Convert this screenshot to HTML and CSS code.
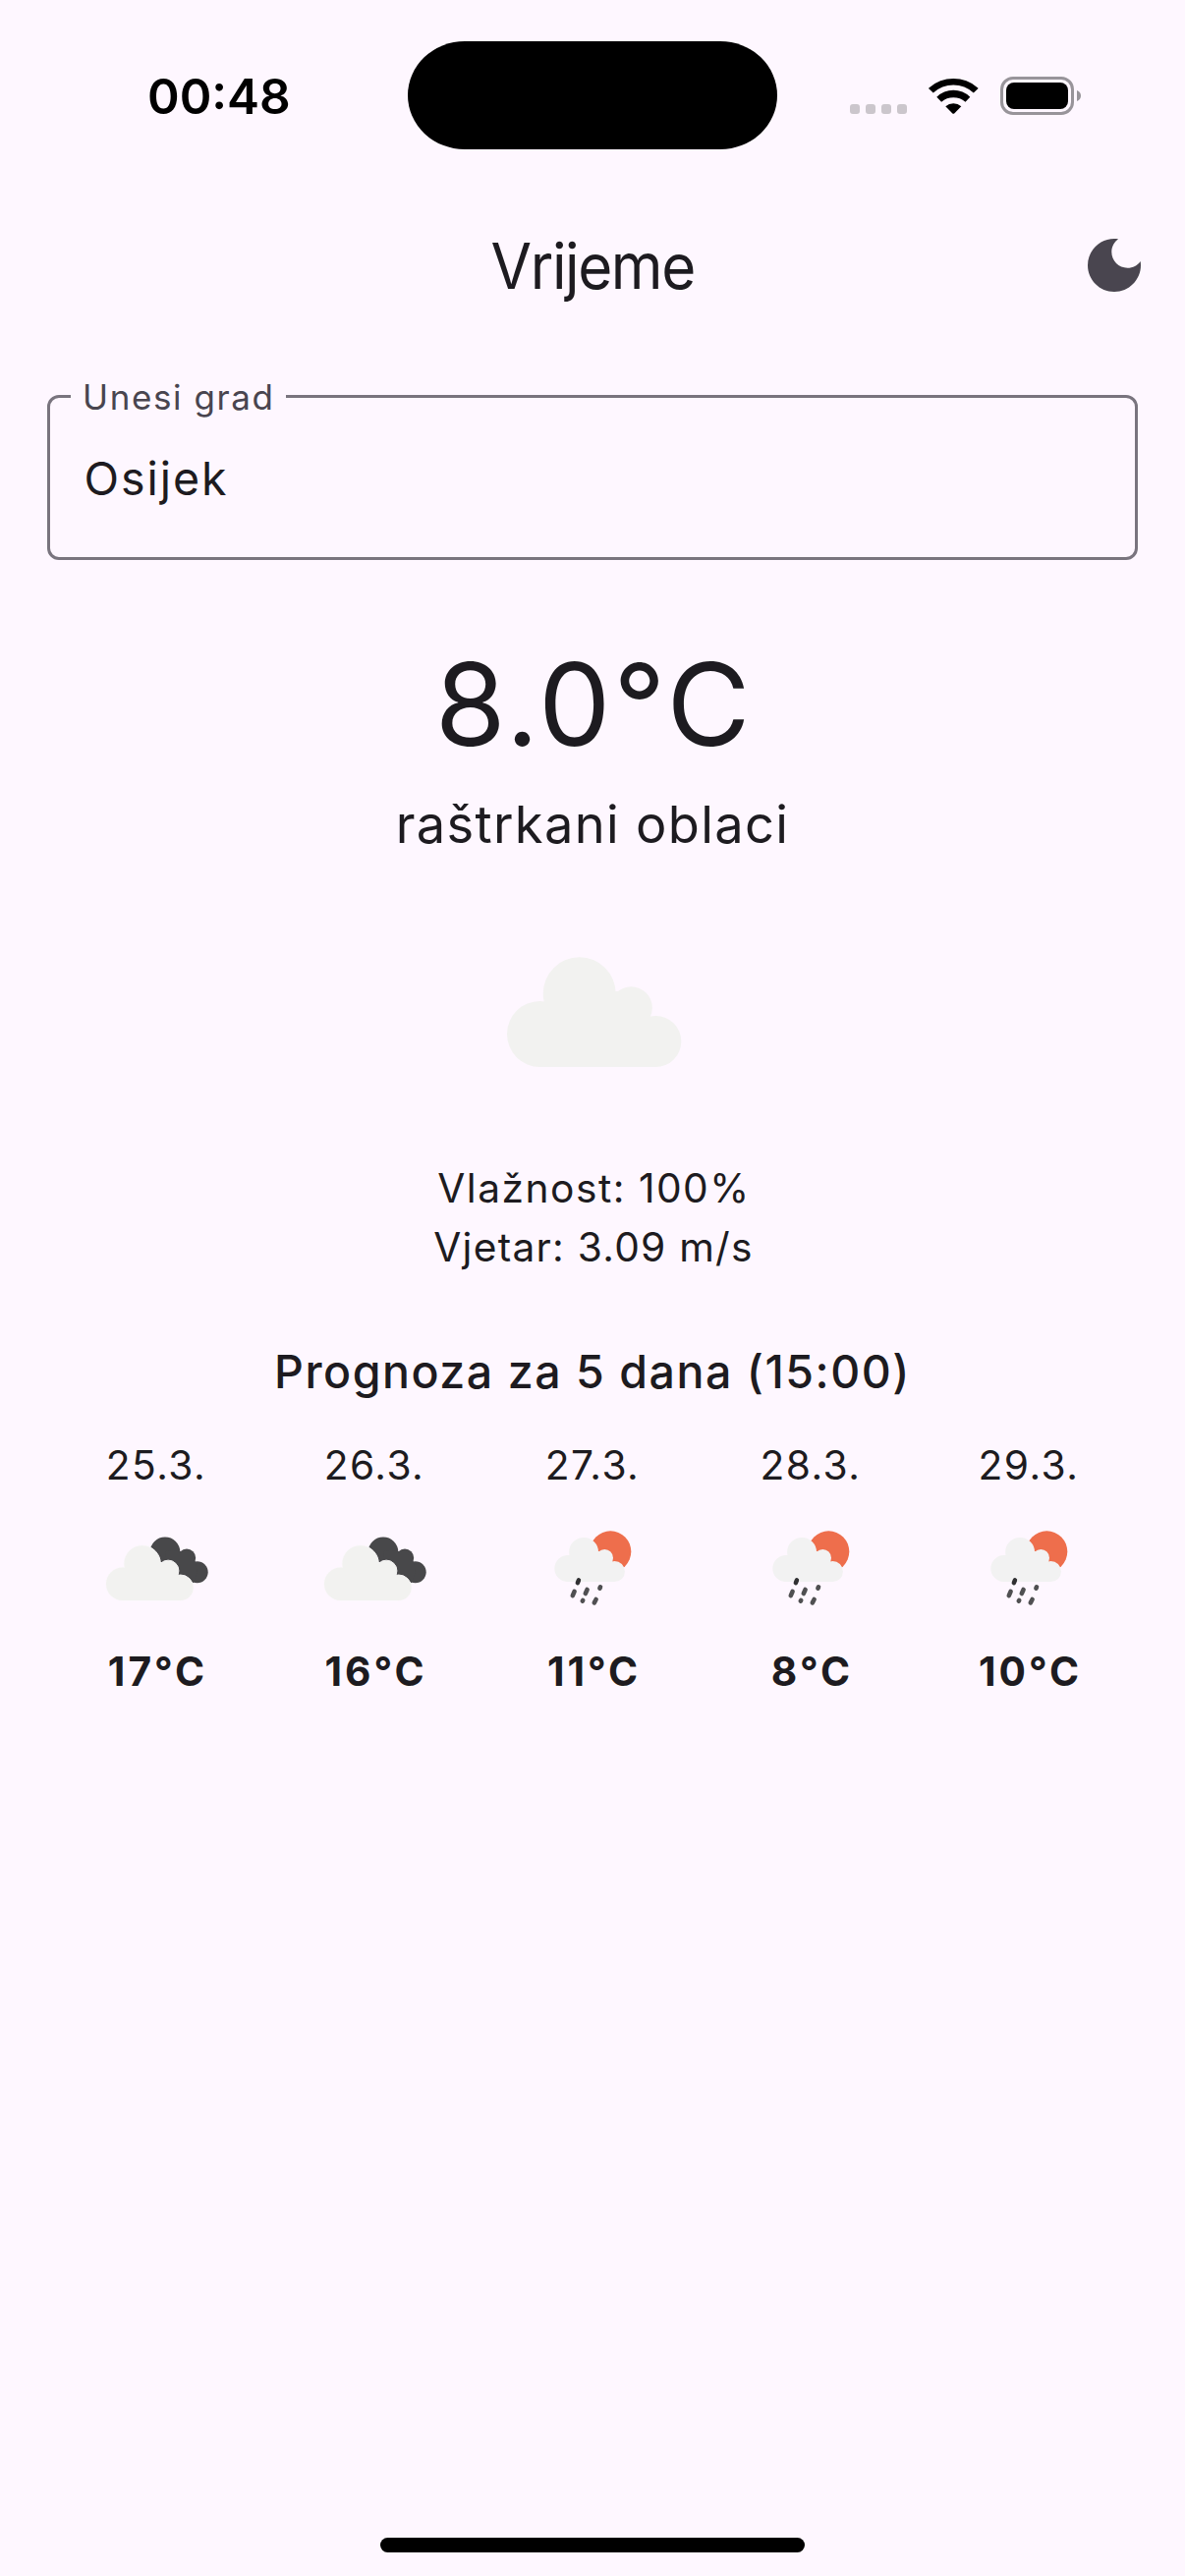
FILE: index.html
```html
<!DOCTYPE html>
<html lang="hr">
<head>
<meta charset="utf-8">
<title>Vrijeme</title>
<link rel="stylesheet" href="styles.css">
</head>
<body>
<svg class="sprite" aria-hidden="true">
  <symbol id="cloud" viewBox="0 0 300 300" overflow="visible">
    <path d="M63 173.500a33.500 33.500 0 1 1 67 0a33.500 33.500 0 1 1 -67 0ZM99.700 132.300a37 37 0 1 1 74 0a37 37 0 1 1 -74 0ZM167.800 146.800a21.500 21.500 0 1 1 43 0a21.500 21.500 0 1 1 -43 0ZM188.300 181a26 26 0 1 1 52 0a26 26 0 1 1 -52 0ZM96.500 207V145L136 130H190L205 160L214.300 207Z"/>
  </symbol>
  <symbol id="broken-clouds" viewBox="0 0 150 150">
    <g class="dark-cloud">
      <circle cx="84" cy="58.700" r="15.300"/>
      <circle cx="106" cy="64.700" r="9.200"/>
      <circle cx="116.700" cy="79.300" r="11"/>
      <path d="M84 57L99 58L107 58L114.800 68.600L117 79L113 90L88 86Z"/>
    </g>
    <use class="cloud cloud-edge" href="#cloud" x="-7.500" y="4.500" width="150" height="150"/>
  </symbol>
  <symbol id="sun-rain" viewBox="0 0 150 150">
    <circle class="sun" cx="93.300" cy="58.300" r="21"/>
    <use class="cloud rain-cloud" href="#cloud" x="10.850" y="5.400" width="121.200" height="121.200"/>
    <path class="drops" d="M56.600 98.900L54.800 103.100M69.600 97L67.800 101M83 94.400L82.400 95.600M65.200 108L64.800 108.600M78.600 107L76.800 110.400"/>
    <path class="drops first" d="M60.900 87.500L59.900 90"/>
  </symbol>
</svg>

<header class="status">
  <time class="clock">00:48</time>
  <div class="island"></div>
  <div class="signal"><i></i><i></i><i></i><i></i></div>
  <svg class="wifi" viewBox="0 0 51 37">
    <path d="M0 11Q0 10.800 .7 10.300A37 37 0 0 1 49.900 10.300Q50.600 10.800 50.600 11L45.800 15.600A30 30 0 0 0 4.800 15.600Z"/>
    <path d="M8.300 19.700A24.100 24.100 0 0 1 42.300 19.700L37.500 24.800A19 19 0 0 0 13.100 24.800Z"/>
    <path d="M17.300 29.300A12 12 0 0 1 33.300 29.300L26.200 36.400Q25.300 37.200 24.400 36.400Z"/>
  </svg>
  <svg class="battery" viewBox="0 0 82 39">
    <rect class="case" x="1.500" y="1.500" width="72" height="36" rx="11.500"/>
    <rect x="6" y="6" width="63" height="27" rx="8"/>
    <path class="nub" d="M78 14C80.800 15.200 82 17.200 82 19.500S80.800 23.800 78 25Z"/>
  </svg>
</header>

<nav class="appbar">
  <h1>Vrijeme</h1>
  <svg class="moon" viewBox="0 0 24 24"><path d="M12 3c-4.970 0-9 4.030-9 9s4.030 9 9 9 9-4.030 9-9c0-.46-.04-.92-.1-1.360-.98 1.370-2.580 2.260-4.400 2.260-2.980 0-5.400-2.420-5.400-5.400 0-1.810.89-3.420 2.260-4.400C12.920 3.040 12.460 3 12 3z"/></svg>
</nav>

<main>
  <fieldset class="field">
    <legend>Unesi grad</legend>
    <div class="value">Osijek</div>
  </fieldset>

  <section class="current">
    <div class="temp">8.0°C</div>
    <div class="desc">raštrkani oblaci</div>
    <svg class="cloud big-icon"><use href="#cloud"/></svg>
    <div class="info humidity">Vlažnost: 100%</div>
    <div class="info wind">Vjetar: 3.09 m/s</div>
  </section>

  <h2>Prognoza za 5 dana (15:00)</h2>
  <section class="days">
    <div class="day"><span>25.3.</span><svg><use href="#broken-clouds"/></svg><b>17°C</b></div>
    <div class="day"><span>26.3.</span><svg><use href="#broken-clouds"/></svg><b>16°C</b></div>
    <div class="day"><span>27.3.</span><svg><use href="#sun-rain"/></svg><b>11°C</b></div>
    <div class="day"><span>28.3.</span><svg><use href="#sun-rain"/></svg><b>8°C</b></div>
    <div class="day"><span>29.3.</span><svg><use href="#sun-rain"/></svg><b>10°C</b></div>
  </section>
</main>

<footer class="home"></footer>
</body>
</html>
```
FILE: styles.css
```css
* { box-sizing: border-box; }

body {
  margin: 0;
  height: 2622px;
  display: flex;
  flex-direction: column;
  background: #fef7ff;
  color: #1d1b20;
  font-family: Inter, "Liberation Sans", sans-serif;
  overflow: hidden;
}

svg { display: block; flex: none; }
.sprite { width: 0; height: 0; }

/* Status bar */
.status {
  height: 186px;
  display: flex;
  align-items: flex-start;
  color: #000;
}
.clock {
  width: 265px;
  margin: 68px 0 0 150px;
  font-size: 49.500px;
  line-height: 60px;
  font-weight: 600;
}
.island {
  width: 376px;
  height: 110px;
  margin-top: 42px;
  border-radius: 58px / 55px;
  background: #000;
}
.signal {
  display: flex;
  gap: 6px;
  margin: 106px 0 0 74px;
}
.signal i {
  width: 10px;
  height: 10px;
  border-radius: 3px;
  background: #cbc6cc;
}
.wifi { width: 51px; height: 37px; margin: 79px 0 0 22.300px; }
.battery { width: 82px; height: 39px; margin: 78px 0 0 21.700px; }
.case { fill: none; stroke: #98949a; stroke-width: 3; }
.nub { fill: #98949a; }

/* App bar */
.appbar {
  height: 168px;
  display: grid;
  grid-template-columns: 108px 1fr 108px;
  align-items: center;
}
h1 {
  grid-column: 2;
  justify-self: center;
  margin: 0;
  padding-top: 2px;
  font-size: 64px;
  line-height: 84px;
  font-weight: 400;
  letter-spacing: -1.500px;
  transform: scaleX(.94);
}
.moon { width: 72px; height: 72px; fill: #49454f; }

main {
  flex: 1;
  padding: 28px 48px 0;
}

/* City field */
.field {
  height: 188px;
  margin: 0;
  padding: 0;
  border: 3px solid #79747e;
  border-radius: 12px;
}
legend {
  width: 219px;
  height: 43px;
  margin-left: 21px;
  padding: 0 0 0 12px;
  font-size: 35px;
  line-height: 44px;
  letter-spacing: 1.600px;
  color: #49454f;
  white-space: nowrap;
}
.value {
  margin-top: 32px;
  padding-left: 34.500px;
  font-size: 46.500px;
  line-height: 60px;
  letter-spacing: 1.950px;
}

/* Current conditions */
.current {
  display: flex;
  flex-direction: column;
  align-items: center;
  padding-top: 75px;
}
.temp {
  padding-left: 3px;
  font-size: 116.400px;
  line-height: 144px;
  letter-spacing: 2.650px;
}
.desc {
  margin: 17px 0 7px;
  font-size: 52.400px;
  line-height: 66px;
  letter-spacing: 1.340px;
}
.big-icon { width: 300px; height: 300px; margin-bottom: 1px; }
.info { font-size: 40.700px; line-height: 60px; }
.humidity { padding-left: 3px; letter-spacing: 1.500px; }
.wind { padding-left: 2px; letter-spacing: 1.250px; }

.cloud { fill: #f2f2f0; }
.cloud-edge { stroke: #fcf9fc; stroke-width: 2; paint-order: stroke; }
.rain-cloud { fill: #f2f2f2; }
.dark-cloud { fill: #48484a; }
.sun { fill: #ee6e4c; }
.drops { fill: none; stroke: #505052; stroke-width: 4.600; stroke-linecap: round; }
.first { stroke: #303032; }

/* Forecast */
h2 {
  margin: 60px 0 30px;
  text-align: center;
  font-size: 46.500px;
  line-height: 72px;
  font-weight: 500;
  letter-spacing: 1.520px;
}
.days {
  display: grid;
  grid-template-columns: repeat(5, 1fr);
}
.day {
  display: flex;
  flex-direction: column;
  align-items: center;
  font-size: 40.700px;
  line-height: 60px;
  letter-spacing: 1.450px;
}
.day svg { width: 150px; height: 150px; margin: -1px 0 1px; }
.day b { padding-left: 3px; font-weight: 700; letter-spacing: 3px; }

.home {
  width: 432px;
  height: 15px;
  margin: 0 auto 24px;
  border-radius: 8px;
  background: #000;
}
```
